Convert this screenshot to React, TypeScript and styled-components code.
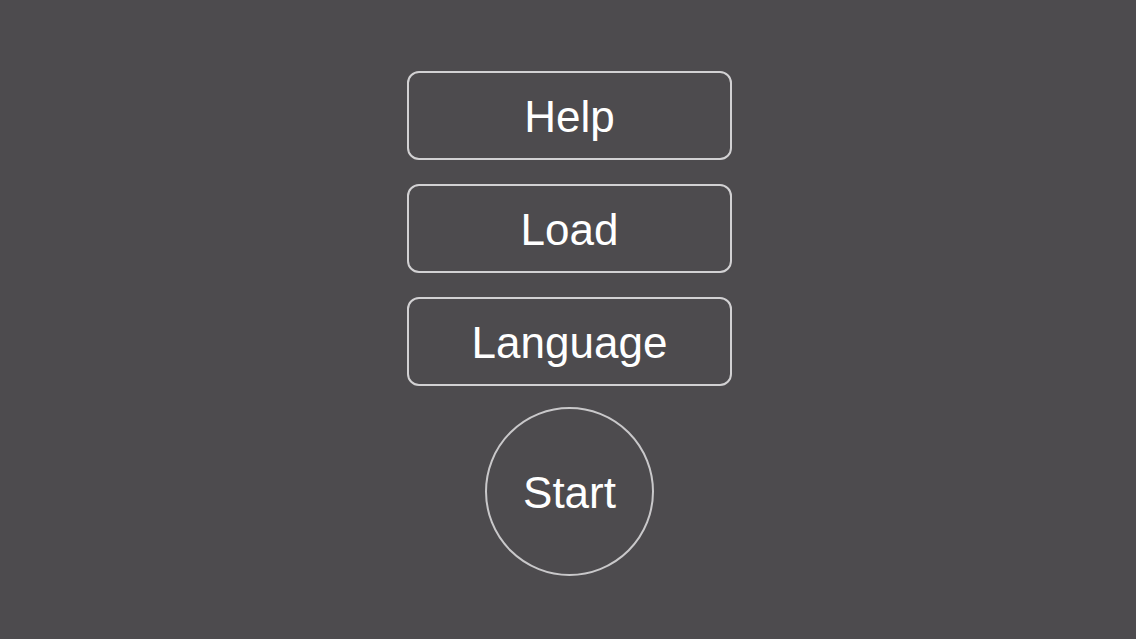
import React from "react";
import styled, { createGlobalStyle } from "styled-components";

const GlobalStyle = createGlobalStyle`
    html, body {
        margin: 0;
        padding: 0;
        background: #4d4b4e;
    }
    body {
        font-family: "Liberation Sans", Arial, sans-serif;
    }
`;

export default function App() {
    const items = ["Help", "Load", "Language"];

    return (
        <>
            <GlobalStyle />
            <Screen>
                <Menu>
                    {items.map((label) => (
                        <MenuButton key={label}>{label}</MenuButton>
                    ))}
                    <StartButton>Start</StartButton>
                </Menu>
            </Screen>
        </>
    );
}

const Screen = styled.div`
    width: 1136px;
    height: 639px;
    background: #4d4b4e;
    display: flex;
    justify-content: center;
    padding-left: 3px;
    box-sizing: border-box;
`;

const Menu = styled.div`
    display: flex;
    flex-direction: column;
    align-items: center;
    gap: 24px;
    padding-top: 71px;
`;

const MenuButton = styled.button`
    width: 325px;
    height: 89px;
    box-sizing: border-box;
    border: 2px solid #d2d1d3;
    border-radius: 12px;
    background: transparent;
    color: #ffffff;
    font-family: "Liberation Sans", Arial, sans-serif;
    font-size: 44px;
    padding: 2px 0 0;
    cursor: pointer;
`;

const StartButton = styled.button`
    width: 169px;
    height: 169px;
    margin-top: -3px;
    box-sizing: border-box;
    border: 2px solid #c9c8ca;
    border-radius: 50%;
    background: transparent;
    color: #ffffff;
    font-family: "Liberation Sans", Arial, sans-serif;
    font-size: 44px;
    padding: 2px 0 0;
    cursor: pointer;
`;
